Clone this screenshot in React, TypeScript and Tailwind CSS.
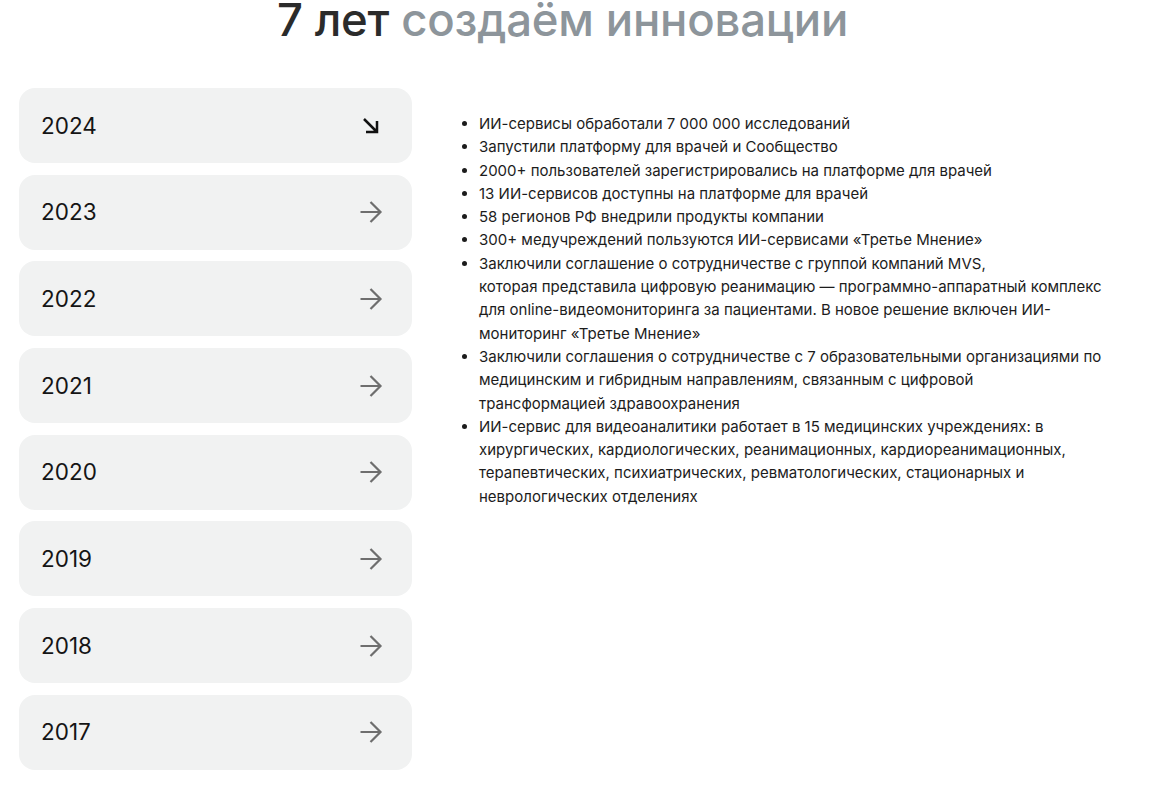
import React from "react";

const years = ["2024", "2023", "2022", "2021", "2020", "2019", "2018", "2017"];

const items: string[][] = [
  ["ИИ-сервисы обработали 7 000 000 исследований"],
  ["Запустили платформу для врачей и Сообщество"],
  ["2000+ пользователей зарегистрировались на платформе для врачей"],
  ["13 ИИ-сервисов доступны на платформе для врачей"],
  ["58 регионов РФ внедрили продукты компании"],
  ["300+ медучреждений пользуются ИИ-сервисами «Третье Мнение»"],
  [
    "Заключили соглашение о сотрудничестве с группой компаний MVS,",
    "которая представила цифровую реанимацию — программно-аппаратный комплекс",
    "для online-видеомониторинга за пациентами. В новое решение включен ИИ-",
    "мониторинг «Третье Мнение»",
  ],
  [
    "Заключили соглашения о сотрудничестве с 7 образовательными организациями по",
    "медицинским и гибридным направлениям, связанным с цифровой",
    "трансформацией здравоохранения",
  ],
  [
    "ИИ-сервис для видеоаналитики работает в 15 медицинских учреждениях: в",
    "хирургических, кардиологических, реанимационных, кардиореанимационных,",
    "терапевтических, психиатрических, ревматологических, стационарных и",
    "неврологических отделениях",
  ],
];

function ArrowRight() {
  return (
    <svg width="24" height="24" viewBox="0 0 24 24" fill="none" stroke="#6e6e6e" strokeWidth="2.2">
      <path d="M1.5 12h20M11.5 2l10 10-10 10" />
    </svg>
  );
}

function ArrowDiag() {
  return (
    <svg width="18" height="18" viewBox="0 0 18 18" fill="none" stroke="#111" strokeWidth="2.5">
      <path d="M2 2l13 13M15 4V15H4" />
    </svg>
  );
}

export default function App() {
  return (
    <div className="w-[1158px] h-[791px] overflow-hidden bg-white font-['Inter',sans-serif]">
      <div className="pl-[19px] w-[1106px]">
        <h1 className="text-center text-[45.5px] leading-[53px] font-medium tracking-[-0.2px] -mt-[7px] text-[#2b2b2b]">
          7 лет <span className="text-[#8d959b]">создаём инновации</span>
        </h1>
        <div className="flex mt-[42px]">
          <div className="w-[393px] shrink-0 flex flex-col gap-[11.7px]">
            {years.map((y, i) => (
              <div
                key={y}
                className="h-[75px] rounded-[16px] bg-[#f1f2f2] flex items-center justify-between pl-[22px] pr-[29px]"
              >
                <span className="text-[22.5px] text-[#151515]">{y}</span>
                <span className="w-[24px] flex justify-center">{i === 0 ? <ArrowDiag /> : <ArrowRight />}</span>
              </div>
            ))}
          </div>
          <ul className="ml-[52px] mt-[24px] list-disc pl-[15px] text-[15px] leading-[23.3px] text-[#1c1c1c] whitespace-nowrap">
            {items.map((lines, i) => (
              <li key={i}>
                {lines.map((l, j) => (
                  <React.Fragment key={j}>
                    {j > 0 && <br />}
                    {l}
                  </React.Fragment>
                ))}
              </li>
            ))}
          </ul>
        </div>
      </div>
    </div>
  );
}
